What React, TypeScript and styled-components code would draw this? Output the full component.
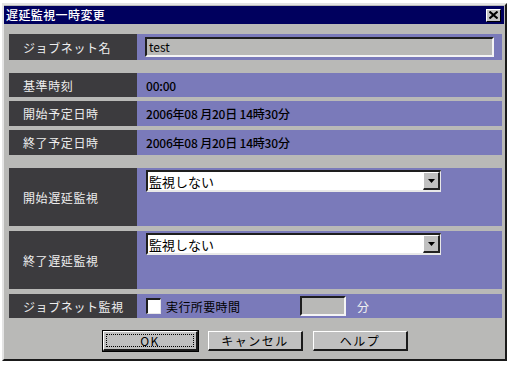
import styled, { createGlobalStyle } from 'styled-components';

const GRAY = '#b9b9b7';
const PURPLE = '#7a7aba';
const DARK = '#3c3b3e';
const NAVY = '#00005e';
const FONT = '"Noto Sans CJK JP", "Liberation Sans", sans-serif';

const GlobalStyle = createGlobalStyle`
  html, body {
    margin: 0;
    padding: 0;
    background: #ffffff;
    font-family: ${FONT};
    font-size: 12px;
  }
`;

const Window = styled.div`
  margin: 3px 0 0 2px;
  width: 505px;
  height: 358px;
  box-sizing: border-box;
  background: ${GRAY};
  border-top: 2px solid #e4e4e4;
  border-left: 2px solid #e4e4e4;
  border-right: 2px solid #1a1a1a;
  border-bottom: 2px solid #1a1a1a;
  display: flex;
  flex-direction: column;
`;

const TitleBar = styled.div`
  margin: 1px 1px 0 0;
  height: 18px;
  background: ${NAVY};
  display: flex;
  align-items: center;
  justify-content: space-between;
  padding: 0 3px 0 2px;
`;

const TitleText = styled.span`
  color: #ffffff;
  font-size: 12px;
  font-weight: 500;
  letter-spacing: 0.4px;
  line-height: 18px;
`;

const CloseButton = styled.div`
  width: 15px;
  height: 13px;
  box-sizing: border-box;
  background: #c4c4c4;
  border-top: 1px solid #ffffff;
  border-left: 1px solid #ffffff;
  border-right: 1px solid #000000;
  border-bottom: 1px solid #000000;
  display: flex;
  align-items: center;
  justify-content: center;
`;

const Body = styled.div`
  flex: 1;
  display: flex;
  flex-direction: column;
  gap: 13px;
  padding: 10px 3px 0 5px;
`;

const Group = styled.div<{ $gap: number }>`
  display: flex;
  flex-direction: column;
  gap: ${p => p.$gap}px;
`;

const Row = styled.div<{ $h: number }>`
  display: flex;
  height: ${p => p.$h}px;
`;

const Label = styled.div`
  width: 128px;
  flex: none;
  background: ${DARK};
  color: #eeeeee;
  padding-left: 14px;
  box-sizing: border-box;
  display: flex;
  align-items: center;
  letter-spacing: 0.6px;
`;

const Value = styled.div<{ $top?: boolean; $pad?: number }>`
  flex: 1;
  background: ${PURPLE};
  display: flex;
  align-items: ${p => (p.$top ? 'flex-start' : 'center')};
  padding: ${p => (p.$top ? '2px' : '0')} 0 0 ${p => p.$pad ?? 9}px;
  color: #000000;
`;

const ValueText = styled.span`
  font-weight: 500;
  letter-spacing: -0.2px;
`;

const TextBox = styled.div<{ $w: number }>`
  width: ${p => p.$w}px;
  height: 20px;
  box-sizing: border-box;
  background: ${GRAY};
  border-top: 2px solid #1e1e1e;
  border-left: 2px solid #1e1e1e;
  border-right: 2px solid #f4f4f4;
  border-bottom: 2px solid #f4f4f4;
  padding-left: 2px;
  line-height: 16px;
  color: #000000;
`;

const Select = styled.div`
  width: 295px;
  height: 22px;
  box-sizing: border-box;
  background: #ffffff;
  border-top: 2px solid #1e1e1e;
  border-left: 2px solid #1e1e1e;
  border-right: 1px solid #e8e8e8;
  border-bottom: 2px solid #e8e8e8;
  display: flex;
  align-items: center;
  justify-content: space-between;
  padding-left: 1px;
`;

const SelectText = styled.span`
  font-size: 13px;
  color: #000000;
`;

const DropButton = styled.div`
  width: 17px;
  height: 18px;
  box-sizing: border-box;
  background: #c0c0c0;
  border-top: 1px solid #ffffff;
  border-left: 1px solid #ffffff;
  border-right: 2px solid #222222;
  border-bottom: 2px solid #222222;
  display: flex;
  align-items: center;
  justify-content: center;
`;

const Check = styled.div`
  width: 15px;
  height: 16px;
  box-sizing: border-box;
  background: #ffffff;
  border-top: 2px solid #1e1e1e;
  border-left: 2px solid #1e1e1e;
  border-right: 1px solid #e8e8e8;
  border-bottom: 1px solid #e8e8e8;
  margin-right: 5px;
`;

const CheckLabel = styled.span`
  font-size: 12px;
  color: #000000;
  width: 134px;
  letter-spacing: 0.4px;
`;

const Unit = styled.span`
  color: #f0f0f0;
  margin-left: 11px;
`;

const ButtonBar = styled.div`
  display: flex;
  justify-content: center;
  gap: 10px;
`;

const Button = styled.div<{ $focus?: boolean }>`
  width: 95px;
  height: 20px;
  box-sizing: border-box;
  background: #c0c0c0;
  border-top: 1px solid #ffffff;
  border-left: 1px solid #ffffff;
  border-right: 2px solid #1a1a1a;
  border-bottom: 2px solid #1a1a1a;
  outline: ${p => (p.$focus ? '1px solid #000000' : 'none')};
  display: flex;
  align-items: center;
  justify-content: center;
  padding: 2px;
  color: #000000;
  font-size: 12px;
`;

const FocusRect = styled.div<{ $focus?: boolean }>`
  flex: 1;
  align-self: stretch;
  display: flex;
  align-items: center;
  justify-content: center;
  border: 1px dotted ${p => (p.$focus ? '#000000' : 'transparent')};
  letter-spacing: 1.5px;
`;

const dateText = '2006年08 月20日  14時30分';

const Arrow = () => (
  <svg width="7" height="4" viewBox="0 0 7 4">
    <path d="M0 0 H7 L3.5 4 Z" fill="#000" />
  </svg>
);

export default function App() {
  return (
    <>
      <GlobalStyle />
      <Window>
        <TitleBar>
          <TitleText>遅延監視一時変更</TitleText>
          <CloseButton>
            <svg width="9" height="8" viewBox="0 0 9 8">
              <path d="M0.5 0.5 L8.5 7.5 M8.5 0.5 L0.5 7.5" stroke="#000" strokeWidth="2" />
            </svg>
          </CloseButton>
        </TitleBar>
        <Body>
          <Group $gap={0}>
            <Row $h={26}>
              <Label>ジョブネット名</Label>
              <Value $pad={8}>
                <TextBox $w={349}>test</TextBox>
              </Value>
            </Row>
          </Group>
          <Group $gap={4}>
            <Row $h={24}>
              <Label>基準時刻</Label>
              <Value><ValueText>00:00</ValueText></Value>
            </Row>
            <Row $h={25}>
              <Label>開始予定日時</Label>
              <Value><ValueText>{dateText}</ValueText></Value>
            </Row>
            <Row $h={25}>
              <Label>終了予定日時</Label>
              <Value><ValueText>{dateText}</ValueText></Value>
            </Row>
          </Group>
          <Group $gap={5}>
            <Row $h={58}>
              <Label>開始遅延監視</Label>
              <Value $top>
                <Select>
                  <SelectText>監視しない</SelectText>
                  <DropButton><Arrow /></DropButton>
                </Select>
              </Value>
            </Row>
            <Row $h={58}>
              <Label>終了遅延監視</Label>
              <Value $top>
                <Select>
                  <SelectText>監視しない</SelectText>
                  <DropButton><Arrow /></DropButton>
                </Select>
              </Value>
            </Row>
            <Row $h={24}>
              <Label>ジョブネット監視</Label>
              <Value>
                <Check />
                <CheckLabel>実行所要時間</CheckLabel>
                <TextBox $w={46} />
                <Unit>分</Unit>
              </Value>
            </Row>
          </Group>
          <ButtonBar>
            <Button $focus><FocusRect $focus>OK</FocusRect></Button>
            <Button><FocusRect>キャンセル</FocusRect></Button>
            <Button><FocusRect>ヘルプ</FocusRect></Button>
          </ButtonBar>
        </Body>
      </Window>
    </>
  );
}
